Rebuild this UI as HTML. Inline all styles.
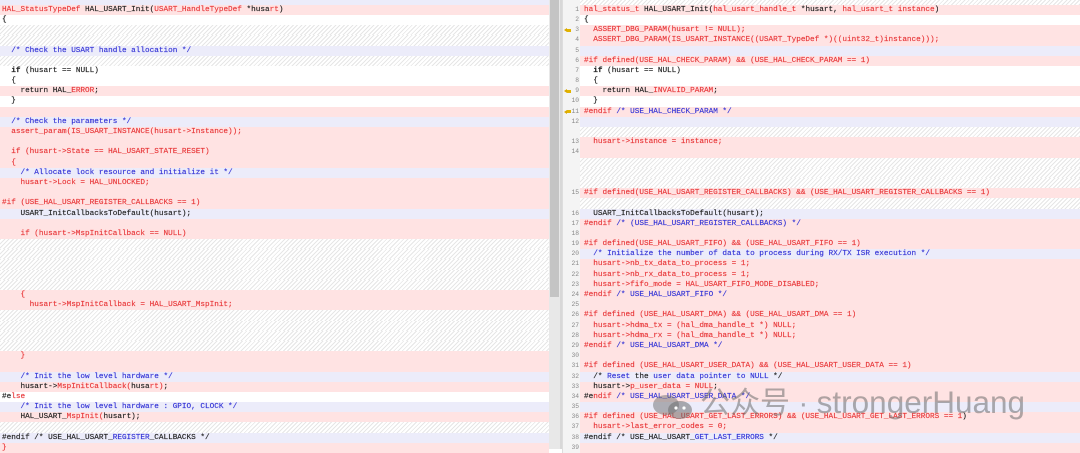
<!DOCTYPE html>
<html><head><meta charset="utf-8"><style>
*{margin:0;padding:0;box-sizing:border-box}
body{width:1080px;height:449px;overflow:hidden;background:#fff;position:relative;font-family:"Liberation Mono",monospace;font-size:7.7px;color:#222}
.pane{position:absolute;top:-5.4px;overflow:hidden;-webkit-text-stroke:0.15px}
.row{height:10.2px;line-height:10.2px;white-space:pre;position:relative}
.p{background:#ffe3e3}.l{background:#ececfa}.w{background:#fff}
.h{background:repeating-linear-gradient(135deg,#e6e6e6 0 1px,#fff 1px 3px)}
.r{color:#e8383a}.b{color:#3434d6}.k{color:#222}
#L{left:0;width:549px}
#L .row{padding-left:2px}
#R{left:562px;width:518px}
#R .row{padding-left:22px}
#R .n{position:absolute;left:0;width:18px;top:0;height:10.2px;background:#f4f4f4;text-align:right;color:#888;font-size:6.3px;padding-right:1px;border-left:1px solid #ddd;-webkit-text-stroke:0}
.arr{position:absolute;left:2px;top:3px;width:0;height:0;border-top:2.5px solid transparent;border-bottom:2.5px solid transparent;border-right:3px solid #d9a800}
.arr:after{content:"";position:absolute;left:3px;top:-1.5px;width:4px;height:3px;background:#e2b400}
.sb{position:absolute;left:549px;top:0;width:11px;height:449px;background:#e8e8e8}
.th{position:absolute;left:550px;top:0;width:9px;height:297px;background:#c4c4c4}
.div{position:absolute;left:560px;top:0;width:2px;height:449px;background:#d8d8d8}
.wm{position:absolute;left:700px;top:384px;font-family:"Liberation Sans","Noto Sans CJK SC",sans-serif;font-size:30px;color:rgba(110,110,110,.55);white-space:pre;line-height:36px}
.wm span{font-size:31.5px}
</style></head><body>
<div class="pane" id="L">
<div class="row l"></div>
<div class="row p"><span class="r">HAL_StatusTypeDef</span> HAL_USART_Init(<span class="r">USART_HandleTypeDef</span> *husa<span class="r">rt</span>)</div>
<div class="row w">{</div>
<div class="row h"></div>
<div class="row h"></div>
<div class="row l b">  /* Check the USART handle allocation */</div>
<div class="row h"></div>
<div class="row w">  <b>if</b> (husart == NULL)</div>
<div class="row w">  {</div>
<div class="row p">    return HAL_<span class="r">ERROR</span>;</div>
<div class="row w">  }</div>
<div class="row p"></div>
<div class="row l b">  /* Check the parameters */</div>
<div class="row p r">  assert_param(IS_USART_INSTANCE(husart-&gt;Instance));</div>
<div class="row p"></div>
<div class="row p r">  if (husart-&gt;State == HAL_USART_STATE_RESET)</div>
<div class="row p r">  {</div>
<div class="row l b">    /* Allocate lock resource and initialize it */</div>
<div class="row p r">    husart-&gt;Lock = HAL_UNLOCKED;</div>
<div class="row p"></div>
<div class="row p r">#if (USE_HAL_USART_REGISTER_CALLBACKS == 1)</div>
<div class="row l">    USART_InitCallbacksToDefault(husart);</div>
<div class="row p"></div>
<div class="row p r">    if (husart-&gt;MspInitCallback == NULL)</div>
<div class="row h"></div><div class="row h"></div><div class="row h"></div><div class="row h"></div><div class="row h"></div>
<div class="row p r">    {</div>
<div class="row p r">      husart-&gt;MspInitCallback = HAL_USART_MspInit;</div>
<div class="row h"></div><div class="row h"></div><div class="row h"></div><div class="row h"></div>
<div class="row p r">    }</div>
<div class="row p"></div>
<div class="row l b">    /* Init the low level hardware */</div>
<div class="row p">    husart-&gt;<span class="r">MspInitCallback(</span>husa<span class="r">rt)</span>;</div>
<div class="row w">#e<span class="r">lse</span></div>
<div class="row l b">    /* Init the low level hardware : GPIO, CLOCK */</div>
<div class="row p">    HAL_USART_<span class="r">MspInit(</span>husart);</div>
<div class="row h"></div>
<div class="row l">#endif /* USE_HAL_USART_<span class="b">REGISTER</span>_CALLBACKS */</div>
<div class="row p r">}</div>
</div>
<div class="sb"></div><div class="th"></div><div class="div"></div>
<div class="pane" id="R">
<div class="row h"><span class="n"></span></div>
<div class="row p r"><span class="n">1</span>hal_status_t <span class="k">HAL_USART_Init(</span>hal_usart_handle_t <span class="k">*husart,</span> hal_usart_t instance<span class="k">)</span></div>
<div class="row w"><span class="n">2</span>{</div>
<div class="row p r"><span class="n">3</span><i class="arr"></i>  ASSERT_DBG_PARAM(husart != NULL);</div>
<div class="row p r"><span class="n">4</span>  ASSERT_DBG_PARAM(IS_USART_INSTANCE((USART_TypeDef *)((uint32_t)instance)));</div>
<div class="row l"><span class="n">5</span></div>
<div class="row p r"><span class="n">6</span>#if defined(USE_HAL_CHECK_PARAM) &amp;&amp; (USE_HAL_CHECK_PARAM == 1)</div>
<div class="row w"><span class="n">7</span>  <b>if</b> (husart == NULL)</div>
<div class="row w"><span class="n">8</span>  {</div>
<div class="row p"><span class="n">9</span><i class="arr"></i>    return HAL_<span class="r">INVALID_PARAM</span>;</div>
<div class="row w"><span class="n">10</span>  }</div>
<div class="row p"><span class="n">11</span><i class="arr"></i><span class="r">#endif</span> <span class="b">/* USE_HAL_CHECK_PARAM */</span></div>
<div class="row l"><span class="n">12</span></div>
<div class="row h"><span class="n"></span></div>
<div class="row p r"><span class="n">13</span>  husart-&gt;instance = instance;</div>
<div class="row p"><span class="n">14</span></div>
<div class="row h"><span class="n"></span></div><div class="row h"><span class="n"></span></div><div class="row h"><span class="n"></span></div>
<div class="row p r"><span class="n">15</span>#if defined(USE_HAL_USART_REGISTER_CALLBACKS) &amp;&amp; (USE_HAL_USART_REGISTER_CALLBACKS == 1)</div>
<div class="row h"><span class="n"></span></div>
<div class="row l"><span class="n">16</span>  USART_InitCallbacksToDefault(husart);</div>
<div class="row p"><span class="n">17</span><span class="r">#endif</span> <span class="b">/* (USE_HAL_USART_REGISTER_CALLBACKS) */</span></div>
<div class="row p"><span class="n">18</span></div>
<div class="row p r"><span class="n">19</span>#if defined(USE_HAL_USART_FIFO) &amp;&amp; (USE_HAL_USART_FIFO == 1)</div>
<div class="row l b"><span class="n">20</span>  /* Initialize the number of data to process during RX/TX ISR execution */</div>
<div class="row p r"><span class="n">21</span>  husart-&gt;nb_tx_data_to_process = 1;</div>
<div class="row p r"><span class="n">22</span>  husart-&gt;nb_rx_data_to_process = 1;</div>
<div class="row p r"><span class="n">23</span>  husart-&gt;fifo_mode = HAL_USART_FIFO_MODE_DISABLED;</div>
<div class="row p"><span class="n">24</span><span class="r">#endif</span> <span class="b">/* USE_HAL_USART_FIFO */</span></div>
<div class="row p"><span class="n">25</span></div>
<div class="row p r"><span class="n">26</span>#if defined (USE_HAL_USART_DMA) &amp;&amp; (USE_HAL_USART_DMA == 1)</div>
<div class="row p r"><span class="n">27</span>  husart-&gt;hdma_tx = (hal_dma_handle_t *) NULL;</div>
<div class="row p r"><span class="n">28</span>  husart-&gt;hdma_rx = (hal_dma_handle_t *) NULL;</div>
<div class="row p"><span class="n">29</span><span class="r">#endif</span> <span class="b">/* USE_HAL_USART_DMA */</span></div>
<div class="row p"><span class="n">30</span></div>
<div class="row p r"><span class="n">31</span>#if defined (USE_HAL_USART_USER_DATA) &amp;&amp; (USE_HAL_USART_USER_DATA == 1)</div>
<div class="row l b"><span class="n">32</span>  <span class="k">/*</span> Reset <span class="k">the</span> user data pointer to NULL <span class="k">*/</span></div>
<div class="row p"><span class="n">33</span>  husart-&gt;<span class="r">p_user_data = NULL</span>;</div>
<div class="row p"><span class="n">34</span>#e<span class="r">ndif</span> <span class="b">/* USE_HAL_USART_USER_DATA */</span></div>
<div class="row l"><span class="n">35</span></div>
<div class="row p r"><span class="n">36</span>#if defined (USE_HAL_USART_GET_LAST_ERRORS) &amp;&amp; (USE_HAL_USART_GET_LAST_ERRORS == 1<span class="k">)</span></div>
<div class="row p r"><span class="n">37</span>  husart-&gt;last_error_codes = 0;</div>
<div class="row l"><span class="n">38</span>#endif /* USE_HAL_USART_<span class="b">GET_LAST_ERRORS</span> */</div>
<div class="row p"><span class="n">39</span></div>
</div>
<svg style="position:absolute;left:652px;top:395px" width="42" height="24" viewBox="0 0 42 24">
<ellipse cx="14" cy="10" rx="13" ry="10" fill="rgba(110,110,110,.5)"/>
<ellipse cx="28" cy="15" rx="12" ry="9" fill="rgba(110,110,110,.55)"/>
<circle cx="24" cy="13" r="1.6" fill="#fff"/><circle cx="32" cy="13" r="1.6" fill="#fff"/>
</svg>
<div class="wm">公众号 · <span>strongerHuang</span></div>
</body></html>
